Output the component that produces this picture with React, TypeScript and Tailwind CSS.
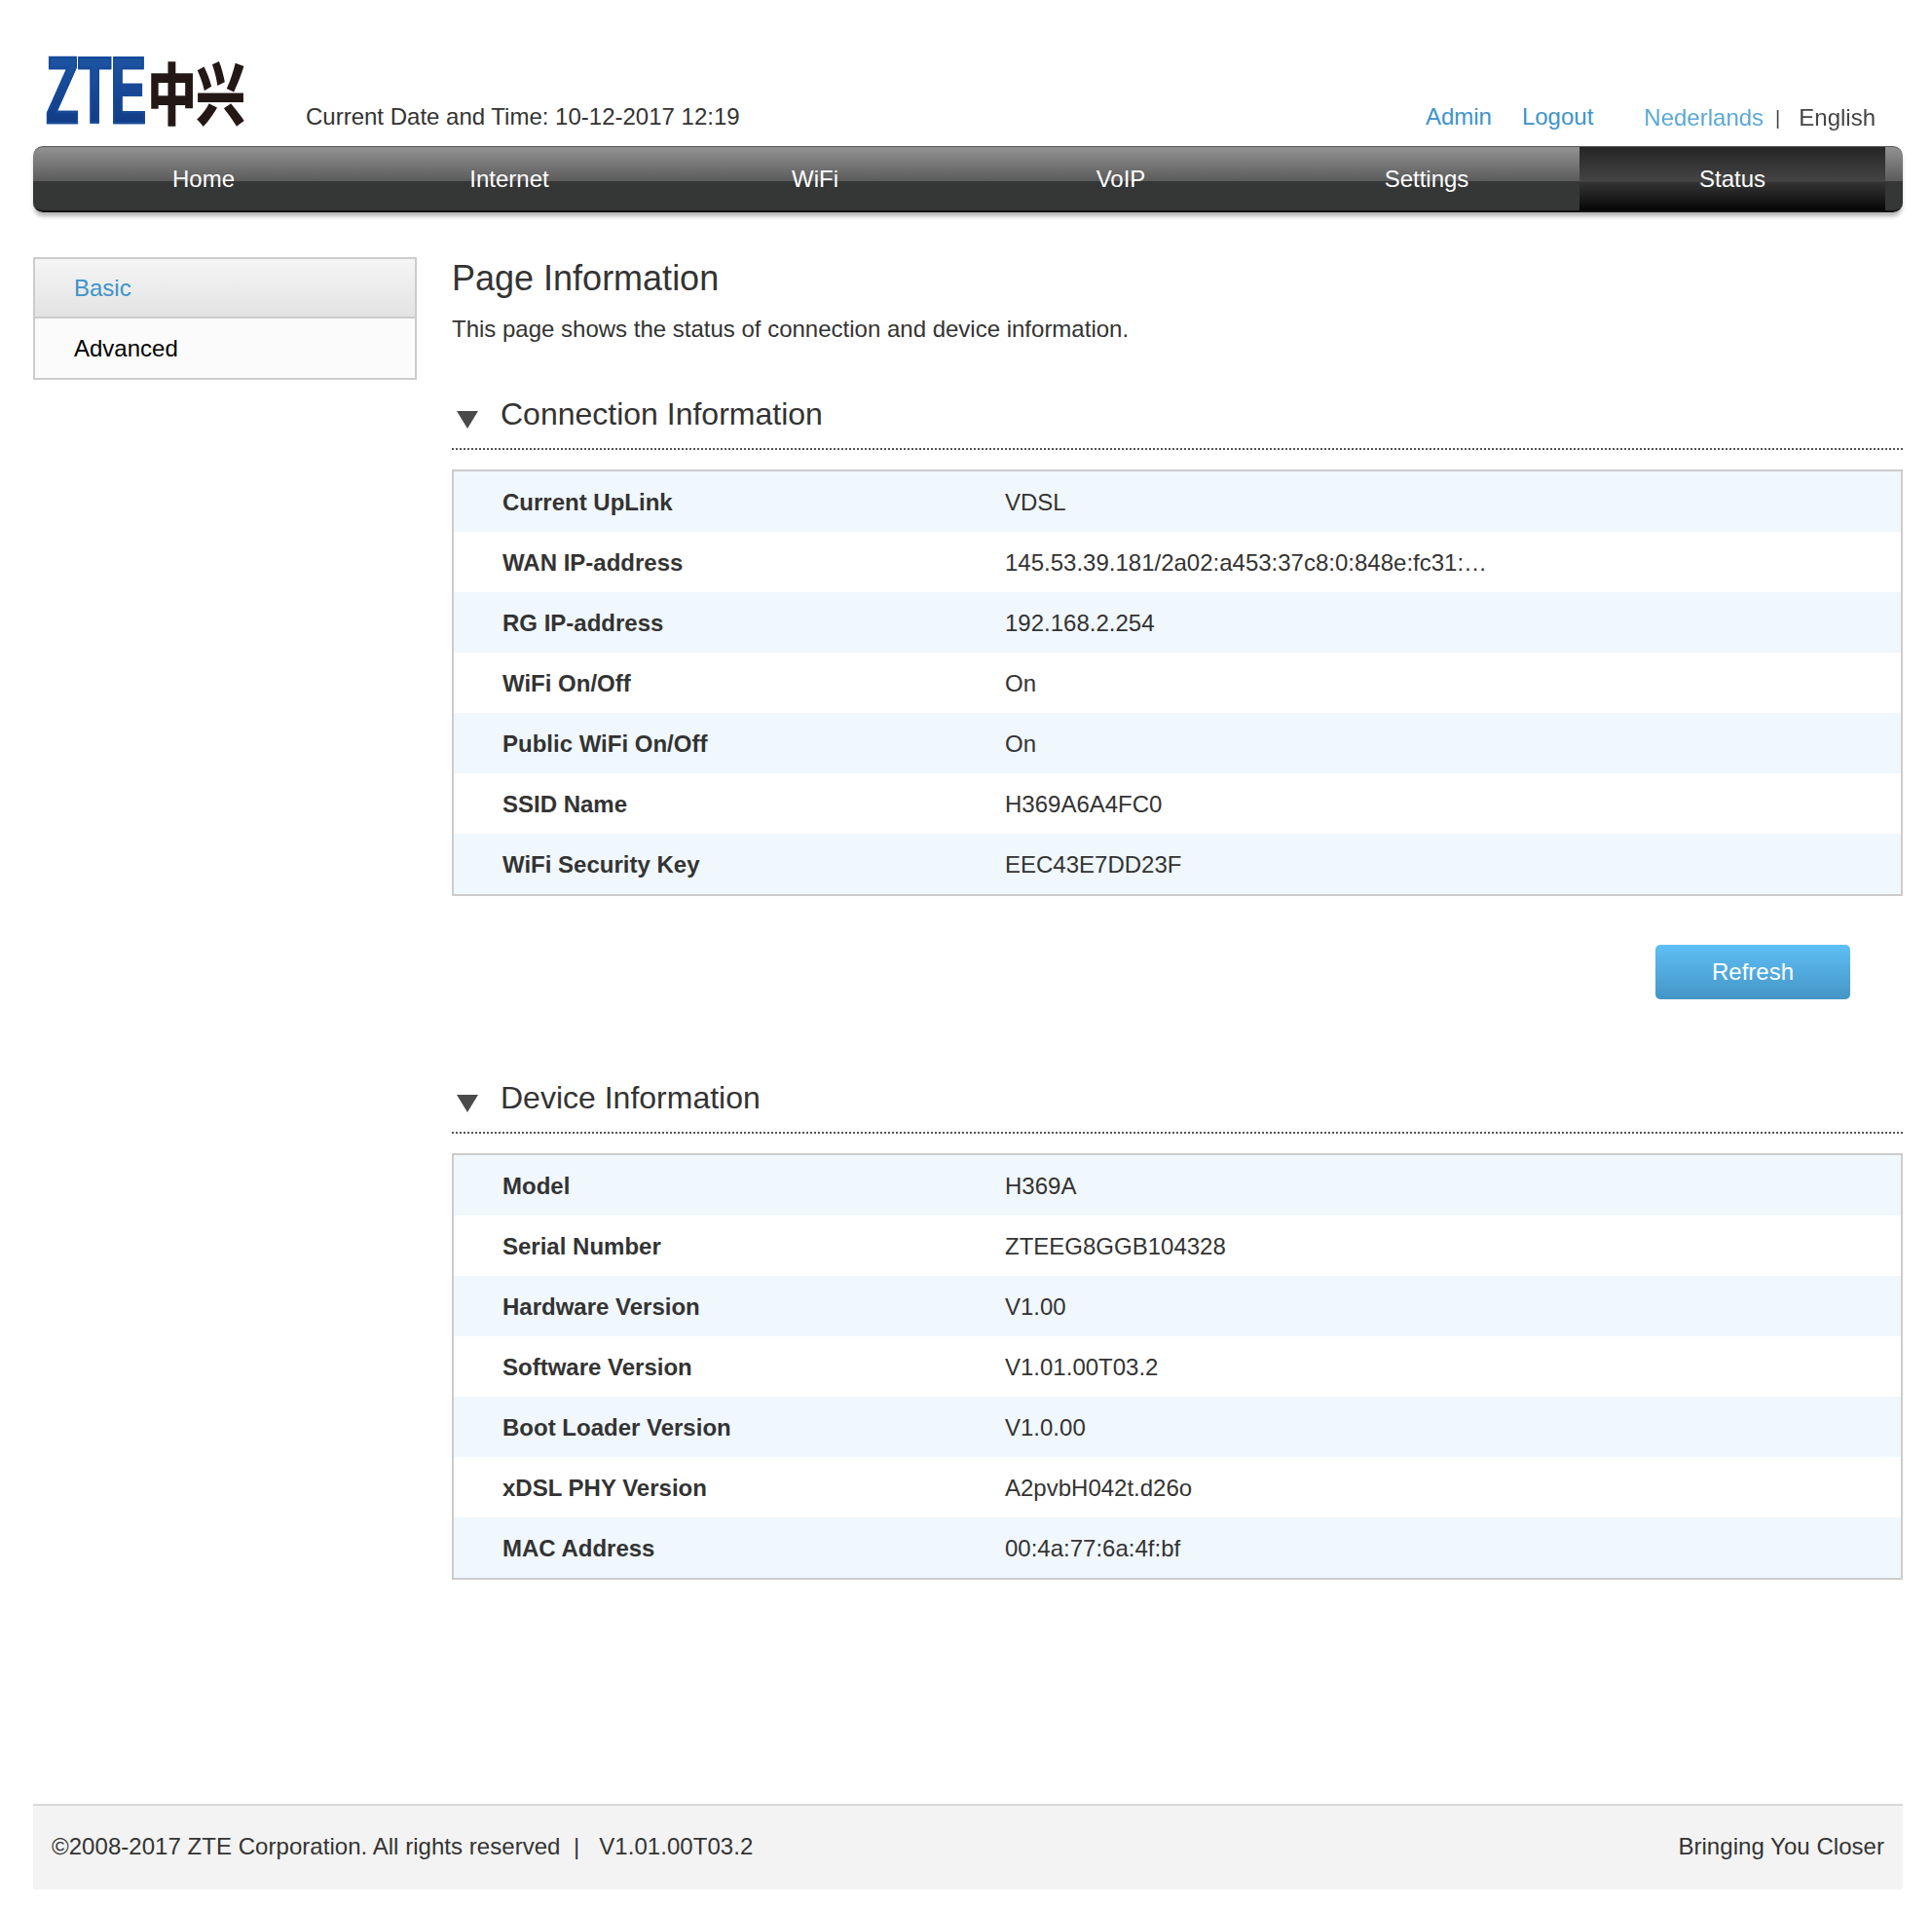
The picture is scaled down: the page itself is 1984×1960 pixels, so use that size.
const connection = [
  ['Current UpLink', 'VDSL'],
  ['WAN IP-address', '145.53.39.181/2a02:a453:37c8:0:848e:fc31:…'],
  ['RG IP-address', '192.168.2.254'],
  ['WiFi On/Off', 'On'],
  ['Public WiFi On/Off', 'On'],
  ['SSID Name', 'H369A6A4FC0'],
  ['WiFi Security Key', 'EEC43E7DD23F'],
]

const device = [
  ['Model', 'H369A'],
  ['Serial Number', 'ZTEEG8GGB104328'],
  ['Hardware Version', 'V1.00'],
  ['Software Version', 'V1.01.00T03.2'],
  ['Boot Loader Version', 'V1.0.00'],
  ['xDSL PHY Version', 'A2pvbH042t.d26o'],
  ['MAC Address', '00:4a:77:6a:4f:bf'],
]

const tabs = ['Home', 'Internet', 'WiFi', 'VoIP', 'Settings', 'Status']

function Logo() {
  return (
    <div className="flex h-[70px] w-[206px]">
      <div className="w-[104px] shrink-0">
        <span className="inline-block origin-top-left scale-x-[0.75] scale-y-[1.3] text-[74px] leading-[54px] font-bold tracking-[-1px] bg-gradient-to-b from-[#1d55a3] to-[#123b86] bg-clip-text text-transparent [-webkit-text-stroke:2px_#174a98] font-['Liberation_Sans',sans-serif]">
          ZTE
        </span>
      </div>
      <div className="shrink-0">
        <span className="inline-block origin-top-left scale-y-[1.35] text-[51px] leading-[52px] font-black text-[#231815] tracking-[-1px] font-['Noto_Sans_CJK_SC',sans-serif]">
          中兴
        </span>
      </div>
    </div>
  )
}

function Section({ title, rows }: { title: string; rows: string[][] }) {
  return (
    <div>
      <div className="flex items-center h-[71px] border-b-2 border-dotted border-[#555]">
        <svg className="w-[22px] h-[18px] ml-[5px] mt-[10px]" viewBox="0 0 22 18">
          <path d="M0 0H22L11 18Z" fill="#4a4a4a" />
        </svg>
        <h3 className="ml-[23px] -mt-[2px] text-[32px] leading-[40px] text-[#333]">{title}</h3>
      </div>
      <div className="mt-[20px] border-2 border-[#ccc]">
        {rows.map(([label, value], i) => (
          <div key={label} className={`flex items-center h-[62px] pt-[2px] text-[24px] text-[#333] ${i % 2 === 0 ? 'bg-[#f0f7fd]' : 'bg-white'}`}>
            <div className="w-[566px] pl-[50px] font-bold">{label}</div>
            <div>{value}</div>
          </div>
        ))}
      </div>
    </div>
  )
}

export default function App() {
  return (
    <div className="w-[1984px] h-[1960px] bg-white pl-[34px] pr-[30px] font-['Liberation_Sans',Arial,sans-serif]">
      <div className="flex items-end h-[150px] pb-[16px] text-[24px] leading-[28px]">
        <div className="pl-[13px] mb-[6px] w-[280px]">
          <Logo />
        </div>
        <div className="text-[#333]">Current Date and Time: 10-12-2017 12:19</div>
        <div className="ml-auto flex text-[#3d93c9]">
          <span>Admin</span>
          <span className="ml-[31px]">Logout</span>
        </div>
        <div className="flex items-center ml-[52px] mr-[28px] translate-y-[1px] blur-[0.4px]">
          <span className="text-[#5ba8d6]">Nederlands</span>
          <span className="ml-[12px] text-[#444] text-[20px]">|</span>
          <span className="ml-[19px] text-[#444]">English</span>
        </div>
      </div>

      <div className="flex px-[18px] h-[68px] rounded-[10px] overflow-hidden border-t border-b-2 border-t-[#555] border-b-[#111] shadow-[0_5px_4px_-1px_rgba(0,0,0,0.3)] bg-[linear-gradient(to_bottom,#929292_0%,#5b5b5b_54%,#353636_54%,#353636_100%)]">
        {tabs.map((tab) => (
          <div
            key={tab}
            className={`w-[314px] flex items-center justify-center text-[24px] text-white ${tab === 'Status' ? 'bg-[linear-gradient(to_bottom,#262626_0%,#444444_54%,#333333_56%,#1c1c1c_80%,#050505_100%)]' : ''}`}
          >
            {tab}
          </div>
        ))}
      </div>

      <div className="flex mt-[46px]">
        <div className="w-[394px] h-[126px] shrink-0 border-2 border-[#ccc] text-[24px]">
          <div className="h-[61px] flex items-center pl-[40px] text-[#3d93c9] border-b-2 border-[#ccc] bg-gradient-to-b from-[#f5f5f5] to-[#e3e3e3]">Basic</div>
          <div className="h-[61px] flex items-center pl-[40px] text-black bg-[#fbfbfb]">Advanced</div>
        </div>

        <div className="ml-[36px] w-[1490px]">
          <h1 className="text-[36px] leading-[44px] text-[#333]">Page Information</h1>
          <p className="mt-[15px] text-[24px] leading-[30px] text-[#333]">This page shows the status of connection and device information.</p>
          <div className="mt-[38px]">
            <Section title="Connection Information" rows={connection} />
          </div>
          <div className="flex justify-end mt-[50px] pr-[54px]">
            <button className="w-[200px] h-[56px] rounded-[5px] text-[24px] text-white bg-gradient-to-b from-[#5fbff5] to-[#4495c6]">Refresh</button>
          </div>
          <div className="mt-[67px]">
            <Section title="Device Information" rows={device} />
          </div>
        </div>
      </div>

      <div className="flex items-center justify-between mt-[230px] h-[88px] px-[19px] pb-[2px] border-t-2 border-[#d9d9d9] bg-[#f3f3f3] text-[24px] tracking-[0.04px] text-[#333]">
        <div>©2008-2017 ZTE Corporation. All rights reserved &nbsp;|&nbsp;&nbsp; V1.01.00T03.2</div>
        <div>Bringing You Closer</div>
      </div>
    </div>
  )
}
